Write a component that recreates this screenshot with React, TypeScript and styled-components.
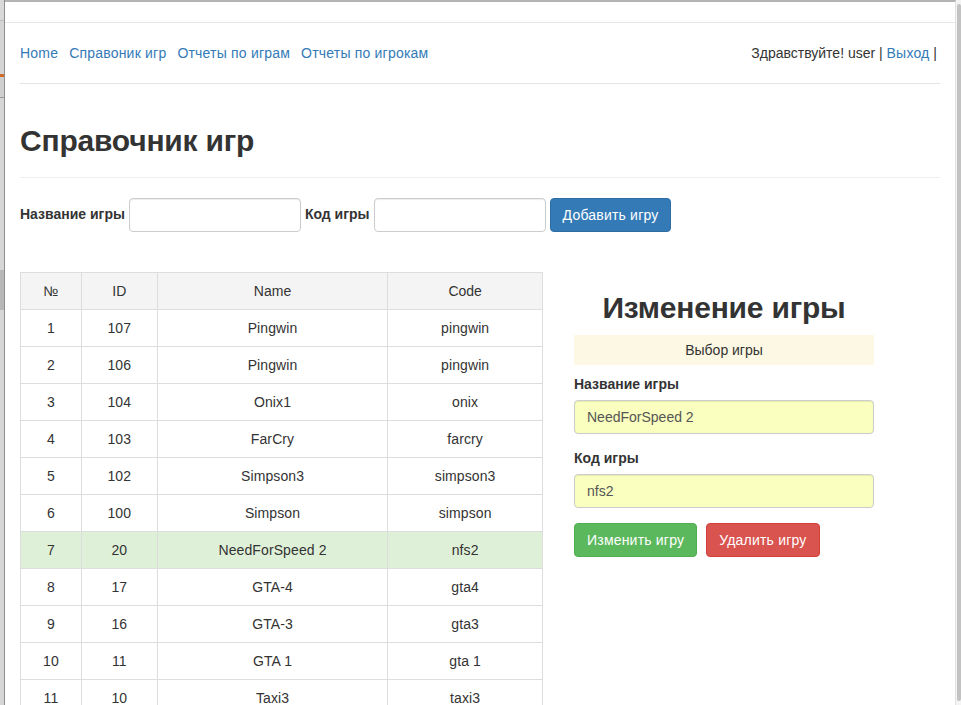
import React from "react";
import styled, { createGlobalStyle } from "styled-components";

const Global = createGlobalStyle`
  html, body { margin: 0; padding: 0; background: #fff; }
  body { font-family: "Liberation Sans", Arial, sans-serif; font-size: 14px; color: #333; line-height: 1.42857; }
  * { box-sizing: border-box; }
`;

const Screen = styled.div`
  width: 961px;
  height: 705px;
  overflow: hidden;
  display: flex;
  background: #fff;
`;

const BackStrip = styled.div`
  width: 5px;
  flex: none;
  border-right: 1px solid #8e8e8e;
  background: linear-gradient(
    to bottom,
    #d9d9d9 0px, #d9d9d9 20px,
    #bdbdbd 20px, #bdbdbd 21px,
    #d4d4d4 21px, #d4d4d4 74px,
    #d06a2a 74px, #d06a2a 77px,
    #cfcfcf 77px, #cfcfcf 97px,
    #9a9a9a 97px, #9a9a9a 98px,
    #d6d6d6 98px, #d6d6d6 270px,
    #b8b8b8 270px, #b8b8b8 310px,
    #d6d6d6 310px, #d6d6d6 705px
  );
`;

const Window = styled.div`
  flex: 1;
  display: flex;
  flex-direction: column;
  border-top: 2px solid #b3b3b3;
  border-right: 1px solid #e2e2e2;
`;

const TopBar = styled.div`
  height: 21px;
  flex: none;
  border-bottom: 1px solid #e7e7e7;
`;

const Container = styled.div`
  padding: 0 15px;
`;

const Nav = styled.nav`
  display: flex;
  justify-content: space-between;
  align-items: center;
  height: 61px;
  padding-top: 2px;
  border-bottom: 1px solid #e5e5e5;
`;

const NavLinks = styled.div`
  display: flex;
  gap: 11px;
`;

const Link = styled.a`
  color: #337ab7;
  text-decoration: none;
  font-size: 14px;
  letter-spacing: 0.2px;
`;

const Greeting = styled.div`
  font-size: 14px;
  color: #333;
  margin-right: 3px;
`;

const Title = styled.h2`
  font-size: 30px;
  font-weight: 700;
  letter-spacing: -0.2px;
  line-height: 1.1;
  margin: 40px 0 0;
  padding-bottom: 20px;
  border-bottom: 1px solid #eee;
  color: #333;
`;

const AddForm = styled.div`
  display: flex;
  align-items: center;
  margin-top: 20px;
`;

const InlineLabel = styled.label`
  font-weight: 700;
  margin-right: 4px;
`;

const TextInput = styled.input<{ $w: number; $fill?: boolean }>`
  width: ${(p) => p.$w}px;
  height: 34px;
  border: 1px solid #ccc;
  border-radius: 4px;
  padding: 6px 12px;
  font: inherit;
  color: #555;
  background: ${(p) => (p.$fill ? "#fafebf" : "#fff")};
  box-shadow: inset 0 1px 1px rgba(0, 0, 0, 0.075);
  margin-right: 4px;
`;

const Btn = styled.button<{ $kind: "primary" | "success" | "danger" }>`
  height: 34px;
  padding: 6px 12px;
  border-radius: 4px;
  font-family: inherit;
  font-size: 14px;
  letter-spacing: 0.2px;
  color: #fff;
  border: 1px solid
    ${(p) => (p.$kind === "primary" ? "#2e6da4" : p.$kind === "success" ? "#4cae4c" : "#d43f3a")};
  background: ${(p) => (p.$kind === "primary" ? "#337ab7" : p.$kind === "success" ? "#5cb85c" : "#d9534f")};
`;

const Columns = styled.div`
  display: flex;
  margin-top: 40px;
`;

const LeftCol = styled.div`
  width: 539px;
  padding-right: 17px;
`;

const RightCol = styled.div`
  width: 300px;
  margin-left: 15px;
  display: flex;
  flex-direction: column;
`;

const Table = styled.table`
  width: 523px;
  border-collapse: collapse;
  border: 1px solid #ddd;
`;

const Th = styled.th<{ $w: number }>`
  width: ${(p) => p.$w}px;
  font-weight: 400;
  text-align: center;
  padding: 8px;
  line-height: 20px;
  border: 1px solid #ddd;
  background: #f4f4f4;
`;

const Tr = styled.tr<{ $active?: boolean }>`
  background: ${(p) => (p.$active ? "#dff0d8" : "#fff")};
`;

const Td = styled.td`
  text-align: center;
  padding: 8px;
  line-height: 20px;
  border: 1px solid #ddd;
  letter-spacing: 0.1px;
`;

const EditTitle = styled.h2`
  font-size: 30px;
  font-weight: 700;
  letter-spacing: -0.2px;
  line-height: 1.1;
  text-align: center;
  margin: 19px 0 11px;
  color: #333;
`;

const Notice = styled.div`
  background: #fcf8e3;
  text-align: center;
  height: 30px;
  line-height: 30px;
`;

const FieldLabel = styled.label`
  display: block;
  font-weight: 700;
  margin: 10px 0 5px;
`;

const Field = styled.div`
  display: flex;
  flex-direction: column;
  margin-bottom: 5px;
`;

const FullInput = styled(TextInput)`
  width: 300px;
  margin-right: 0;
`;

const Actions = styled.div`
  display: flex;
  gap: 9px;
  margin-top: 10px;
`;

const Scroll = styled.div`
  width: 5px;
  flex: none;
  background: #f4f4f4;
  padding: 4px 0 4px 1px;
  display: flex;
`;

const Thumb = styled.div`
  flex: 1;
  background: #c2c2c2;
  border-radius: 3px;
`;

const rows = [
  [1, 107, "Pingwin", "pingwin"],
  [2, 106, "Pingwin", "pingwin"],
  [3, 104, "Onix1", "onix"],
  [4, 103, "FarCry", "farcry"],
  [5, 102, "Simpson3", "simpson3"],
  [6, 100, "Simpson", "simpson"],
  [7, 20, "NeedForSpeed 2", "nfs2"],
  [8, 17, "GTA-4", "gta4"],
  [9, 16, "GTA-3", "gta3"],
  [10, 11, "GTA 1", "gta 1"],
  [11, 10, "Taxi3", "taxi3"],
  [12, 9, "Taxi2", "taxi2"],
];

export default function App() {
  return (
    <>
      <Global />
      <Screen>
        <BackStrip />
        <Window>
          <TopBar />
          <Container>
            <Nav>
              <NavLinks>
                <Link href="#">Home</Link>
                <Link href="#">Справоник игр</Link>
                <Link href="#">Отчеты по играм</Link>
                <Link href="#">Отчеты по игрокам</Link>
              </NavLinks>
              <Greeting>
                Здравствуйте! user | <Link href="#">Выход</Link> |
              </Greeting>
            </Nav>
            <Title>Справочник игр</Title>
            <AddForm>
              <InlineLabel>Название игры</InlineLabel>
              <TextInput $w={172} />
              <InlineLabel>Код игры</InlineLabel>
              <TextInput $w={172} />
              <Btn $kind="primary">Добавить игру</Btn>
            </AddForm>
            <Columns>
              <LeftCol>
                <Table>
                  <thead>
                    <tr>
                      <Th $w={61}>№</Th>
                      <Th $w={76}>ID</Th>
                      <Th $w={231}>Name</Th>
                      <Th $w={155}>Code</Th>
                    </tr>
                  </thead>
                  <tbody>
                    {rows.map((r) => (
                      <Tr key={r[0]} $active={r[0] === 7}>
                        <Td>{r[0]}</Td>
                        <Td>{r[1]}</Td>
                        <Td>{r[2]}</Td>
                        <Td>{r[3]}</Td>
                      </Tr>
                    ))}
                  </tbody>
                </Table>
              </LeftCol>
              <RightCol>
                <EditTitle>Изменение игры</EditTitle>
                <Notice>Выбор игры</Notice>
                <Field>
                  <FieldLabel>Название игры</FieldLabel>
                  <FullInput $w={300} $fill defaultValue="NeedForSpeed 2" />
                </Field>
                <Field>
                  <FieldLabel>Код игры</FieldLabel>
                  <FullInput $w={300} $fill defaultValue="nfs2" />
                </Field>
                <Actions>
                  <Btn $kind="success">Изменить игру</Btn>
                  <Btn $kind="danger">Удалить игру</Btn>
                </Actions>
              </RightCol>
            </Columns>
          </Container>
        </Window>
        <Scroll>
          <Thumb />
        </Scroll>
      </Screen>
    </>
  );
}
